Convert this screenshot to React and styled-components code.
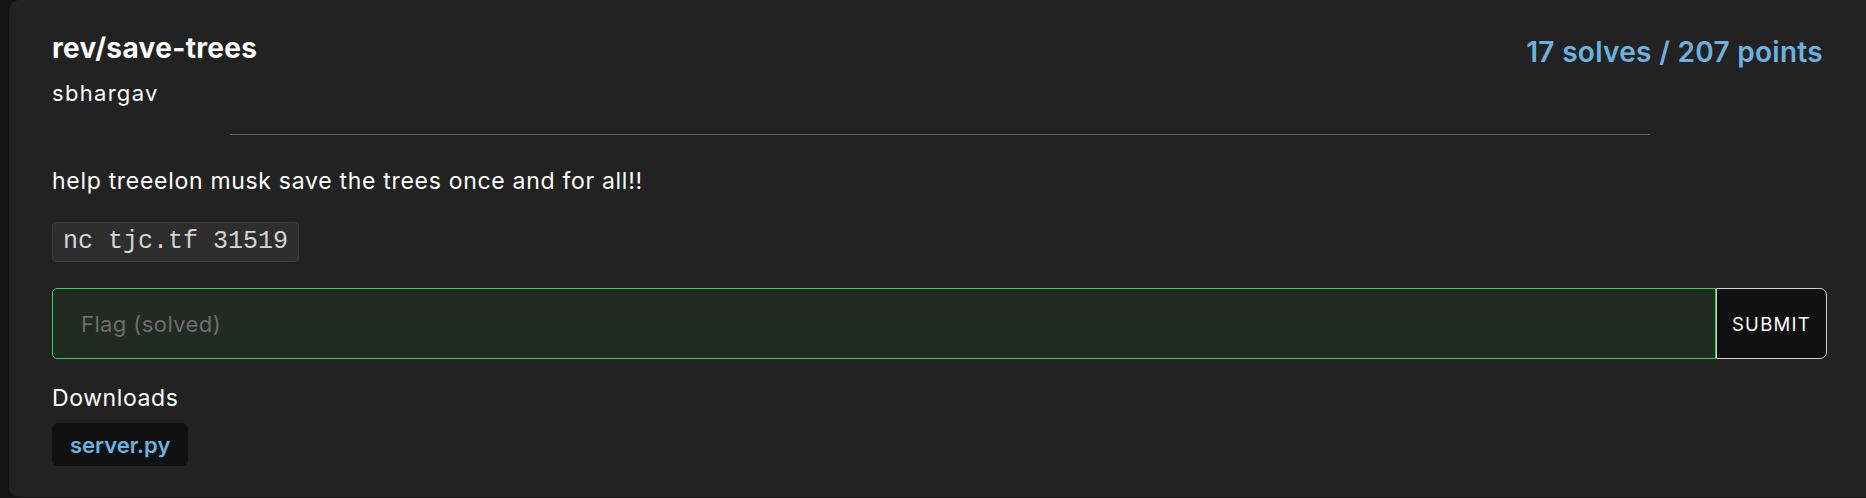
import React from 'react'
import styled, { createGlobalStyle } from 'styled-components'

const GlobalStyle = createGlobalStyle`
  html, body {
    margin: 0;
    padding: 0;
    background: #141414;
  }
  body {
    font-family: Inter, "Noto Sans", sans-serif;
    color: #fff;
  }
`

const Page = styled.div`
  padding-left: 9px;
  height: 498px;
  box-sizing: border-box;
`

const Card = styled.div`
  background: #222;
  border-radius: 10px 0 0 10px;
  height: 497px;
  box-sizing: border-box;
  padding: 29px 39px 0 43px;
`

const Header = styled.div`
  display: flex;
  justify-content: space-between;
  align-items: flex-start;
`

const Title = styled.h2`
  margin: 0;
  font-size: 28px;
  line-height: 38px;
  font-weight: 700;
  letter-spacing: 0.35px;
`

const Author = styled.div`
  font-size: 22px;
  line-height: 30px;
  letter-spacing: 1.3px;
  margin-top: 11px;
`

const Stats = styled.div`
  font-size: 28px;
  line-height: 38px;
  font-weight: 600;
  letter-spacing: 0.3px;
  color: #6cb2e0;
  margin-top: 4px;
  margin-right: 4px;
`

const Rule = styled.hr`
  width: 80%;
  border: 0;
  border-top: 1px solid #666;
  margin: 26px auto 0;
`

const Description = styled.p`
  margin: 31px 0 0;
  font-size: 23px;
  line-height: 30px;
  letter-spacing: 0.7px;
`

const Code = styled.code`
  display: inline-block;
  margin-top: 26px;
  padding: 4px 10px 5px;
  font-family: "Liberation Mono", "Courier New", monospace;
  font-size: 25px;
  line-height: 29px;
  color: #d4d4d4;
  background: #2e2e2e;
  border: 1px solid #3c3c3c;
  border-radius: 4px;
`

const FlagForm = styled.form`
  display: flex;
  margin-top: 26px;
  height: 71px;
`

const FlagInput = styled.input`
  flex: 1;
  min-width: 0;
  box-sizing: border-box;
  height: 100%;
  padding: 0 28px;
  background: #212b21;
  border: 1px solid ${props => (props.solved ? '#22dd4f' : '#555')};
  border-radius: 5px 0 0 5px;
  font-family: inherit;
  font-size: 22px;
  letter-spacing: 0.4px;
  color: #fff;
  outline: none;

  &::placeholder {
    color: #6e6e6e;
  }
`

const SubmitButton = styled.button`
  box-sizing: border-box;
  width: 111px;
  height: 100%;
  background: #111;
  border: 1px solid #cfcfcf;
  border-radius: 0 7px 7px 0;
  color: #fff;
  font-family: inherit;
  font-size: 18.5px;
  font-weight: 400;
  letter-spacing: 1.3px;
  text-transform: uppercase;
  cursor: pointer;
`

const SectionLabel = styled.div`
  margin-top: 24px;
  font-size: 23px;
  line-height: 30px;
  letter-spacing: 0.6px;
`

const FileList = styled.div`
  display: flex;
  gap: 10px;
  margin-top: 10px;
`

const FileLink = styled.a`
  display: inline-flex;
  align-items: center;
  height: 43px;
  padding: 0 18px;
  background: #111;
  border-radius: 6px;
  color: #6cb2e0;
  font-size: 22px;
  font-weight: 600;
  text-decoration: none;
`

export default function App () {
  return (
    <>
      <GlobalStyle />
      <Page>
        <Card>
          <Header>
            <div>
              <Title>rev/save-trees</Title>
              <Author>sbhargav</Author>
            </div>
            <Stats>17 solves / 207 points</Stats>
          </Header>
          <Rule />
          <Description>help treeelon musk save the trees once and for all!!</Description>
          <Code>nc tjc.tf 31519</Code>
          <FlagForm onSubmit={e => e.preventDefault()}>
            <FlagInput solved placeholder='Flag (solved)' />
            <SubmitButton type='submit'>Submit</SubmitButton>
          </FlagForm>
          <SectionLabel>Downloads</SectionLabel>
          <FileList>
            <FileLink href='#'>server.py</FileLink>
          </FileList>
        </Card>
      </Page>
    </>
  )
}
